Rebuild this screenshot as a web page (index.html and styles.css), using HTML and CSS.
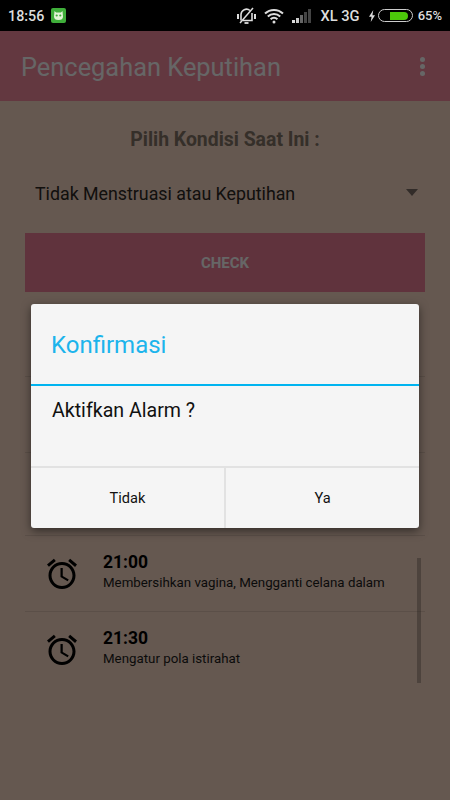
FILE: index.html
```html
<!DOCTYPE html>
<html lang="id">
<head>
    <meta charset="UTF-8">
    <meta name="viewport" content="width=device-width, initial-scale=1.0">
    <title>Pencegahan Keputihan</title>
    <link rel="stylesheet" href="styles.css">
</head>
<body>

<div class="phone">
    <div class="status-bar">
        <span class="clock">18:56</span>
        <svg class="app-badge" width="15" height="15" viewBox="0 0 15 15">
            <rect width="15" height="15" rx="2" fill="#3fae3a"/>
            <path d="M3.5 3l1.6 1.6h4.8L11.5 3l.5 5.5a4.5 3.6 0 0 1-9 0z" fill="#e4f5d8"/>
            <circle cx="5.7" cy="7.5" r="1.1" fill="#3fae3a"/>
            <circle cx="9.3" cy="7.5" r="1.1" fill="#3fae3a"/>
        </svg>
        <div class="status-right">
            <svg width="19" height="20" viewBox="0 0 19 20" fill="none">
                <path d="M0 8h2v5H0zM17 8h2v5h-2z" fill="#ddd"/>
                <path d="M4 14.5V8.5a5.5 5.5 0 0 1 9-4M15 7v7.5H6" stroke="#ddd" stroke-width="1.6"/>
                <path d="M3 17L16 2" stroke="#ddd" stroke-width="1.5"/>
                <path d="M7.5 17h4" stroke="#ddd" stroke-width="1.8"/>
            </svg>
            <svg class="wifi" width="20" height="16" viewBox="0 0 20 16" fill="none" stroke="#ddd" stroke-width="2">
                <path d="M1 5.5a13 13 0 0 1 18 0M3.8 8.5a9 9 0 0 1 12.4 0M6.6 11.2a5 5 0 0 1 6.8 0"/>
                <circle cx="10" cy="14" r="1.5" fill="#ddd" stroke="none"/>
            </svg>
            <svg class="signal" width="20" height="14" viewBox="0 0 20 14">
                <rect x="0" y="11" width="3" height="3" fill="#ddd"/>
                <rect x="4" y="9" width="3" height="5" fill="#ccc"/>
                <rect x="8" y="6" width="3" height="8" fill="#666"/>
                <rect x="12" y="3" width="3" height="11" fill="#444"/>
                <rect x="16" y="0" width="3" height="14" fill="#444"/>
            </svg>
            <span class="carrier">XL 3G</span>
            <svg class="bolt" width="6" height="14" viewBox="0 0 7 14">
                <path d="M5 0L0 8h3l-1 6 5-8H4z" fill="#ddd"/>
            </svg>
            <div class="battery"><div class="battery-level" style="width:65%"></div></div>
            <span class="percent">65%</span>
        </div>
    </div>

    <div class="screen">
        <header class="app-bar">
            <h1>Pencegahan Keputihan</h1>
            <div class="overflow"><i></i><i></i><i></i></div>
        </header>

        <div class="content">
            <h2>Pilih Kondisi Saat Ini :</h2>
            <div class="spinner">
                <span>Tidak Menstruasi atau Keputihan</span>
                <div class="spinner-arrow"></div>
            </div>
            <div class="check-btn">CHECK</div>
            <div class="alarm-list">
                <div class="alarm-row"></div>
                <div class="alarm-row"></div>
                <div class="alarm-row tall"></div>
                <div class="alarm-row">
                    <svg class="alarm-icon" width="36" height="36" viewBox="0 0 24 24"><path d="M22 5.72l-4.6-3.86-1.29 1.53 4.6 3.86L22 5.72zM7.88 3.39L6.6 1.86 2 5.71l1.29 1.53 4.59-3.85zM12.5 8H11v6l4.75 2.85.75-1.23-4-2.37V8zM12 4c-4.97 0-9 4.03-9 9s4.03 9 9 9 9-4.03 9-9-4.03-9-9-9zm0 16c-3.87 0-7-3.13-7-7s3.13-7 7-7 7 3.13 7 7-3.13 7-7 7z"/></svg>
                    <div class="alarm-body">
                        <div class="alarm-time">21:00</div>
                        <div class="alarm-text">Membersihkan vagina, Mengganti celana dalam</div>
                    </div>
                </div>
                <div class="alarm-row last">
                    <svg class="alarm-icon" width="36" height="36" viewBox="0 0 24 24"><path d="M22 5.72l-4.6-3.86-1.29 1.53 4.6 3.86L22 5.72zM7.88 3.39L6.6 1.86 2 5.71l1.29 1.53 4.59-3.85zM12.5 8H11v6l4.75 2.85.75-1.23-4-2.37V8zM12 4c-4.97 0-9 4.03-9 9s4.03 9 9 9 9-4.03 9-9-4.03-9-9-9zm0 16c-3.87 0-7-3.13-7-7s3.13-7 7-7 7 3.13 7 7-3.13 7-7 7z"/></svg>
                    <div class="alarm-body">
                        <div class="alarm-time">21:30</div>
                        <div class="alarm-text">Mengatur pola istirahat</div>
                    </div>
                </div>
                <div class="scrollbar"></div>
            </div>
        </div>

        <div class="scrim">
            <div class="dialog">
                <div class="dialog-title">Konfirmasi</div>
                <div class="dialog-msg">Aktifkan Alarm ?</div>
                <div class="dialog-actions">
                    <div class="dialog-btn">Tidak</div>
                    <div class="dialog-btn">Ya</div>
                </div>
            </div>
        </div>
    </div>
</div>

</body>
</html>
```

FILE: styles.css
```css
* {
    box-sizing: border-box;
}
body {
    font-family: Roboto, sans-serif;
    margin: 0;
    padding: 0;
}
.phone {
    width: 450px;
    height: 800px;
    display: flex;
    flex-direction: column;
    overflow: hidden;
}
.status-bar {
    height: 31px;
    flex: none;
    background-color: #000;
    color: #ddd;
    display: flex;
    align-items: center;
    padding: 0 8px;
    font-size: 13px;
    font-weight: 500;
}
.clock {
    font-size: 14.3px;
}
.app-badge {
    margin-left: 7px;
    margin-top: -1px;
}
.status-right {
    margin-left: auto;
    display: flex;
    align-items: center;
}
.wifi {
    margin-left: 8px;
}
.signal {
    margin-left: 8px;
}
.carrier {
    margin-left: 8px;
    font-size: 14.7px;
}
.bolt {
    margin-left: 9px;
}
.battery {
    width: 35px;
    height: 13px;
    margin-left: 3px;
    border: 1.5px solid #ccc;
    border-radius: 7px;
    padding: 1.5px 2px;
}
.battery-level {
    height: 100%;
    margin-left: 9px;
    background-color: #4cc80a;
    border-radius: 0 4px 4px 0;
}
.percent {
    margin-left: 5px;
}
.screen {
    flex: 1;
    position: relative;
    background-color: #fcdcc8;
    display: flex;
    flex-direction: column;
}
.app-bar {
    height: 70px;
    flex: none;
    background-color: #f88ca0;
    color: #fff;
    display: flex;
    align-items: center;
    justify-content: space-between;
    padding: 0 25px 0 21px;
}
.app-bar h1 {
    margin: 0;
    padding-top: 2px;
    font-size: 25.4px;
    font-weight: 400;
}
.overflow {
    display: flex;
    flex-direction: column;
    gap: 2px;
}
.overflow i {
    display: block;
    width: 5px;
    height: 5px;
    border-radius: 50%;
    background-color: #fff;
}
.content {
    flex: 1;
    padding: 0 25px;
}
.content h2 {
    margin: 28px 0 0;
    font-size: 19.4px;
    font-weight: 700;
    line-height: 22px;
    text-align: center;
    color: #857568;
}
.spinner {
    display: flex;
    align-items: center;
    justify-content: space-between;
    height: 44px;
    margin-top: 20px;
    padding: 0 7px 0 10px;
    font-size: 17.8px;
    color: #2d2824;
}
.spinner-arrow {
    width: 0;
    height: 0;
    margin-top: -2px;
    border-left: 6px solid transparent;
    border-right: 6px solid transparent;
    border-top: 7px solid #7d6e66;
}
.check-btn {
    height: 59px;
    margin-top: 18px;
    background-color: #f08098;
    color: #fff;
    font-size: 15px;
    font-weight: 700;
    display: flex;
    align-items: center;
    justify-content: center;
}
.alarm-list {
    position: relative;
    margin-top: 9px;
}
.alarm-row {
    height: 76px;
    display: flex;
    align-items: center;
    border-bottom: 1px solid #e3c6b4;
    padding-left: 19px;
    color: #000;
}
.alarm-row.tall {
    height: 83px;
}
.alarm-row.last {
    border-bottom-color: transparent;
}
.alarm-icon {
    flex: none;
    margin-right: 23px;
}
.alarm-body {
    margin-bottom: 3px;
}
.alarm-time {
    font-size: 17.5px;
    font-weight: 700;
    line-height: 21px;
}
.alarm-text {
    font-size: 13.3px;
    line-height: 20px;
    color: #1c1c1c;
}
.scrollbar {
    position: absolute;
    right: 4px;
    top: 257px;
    width: 4px;
    height: 125px;
    background-color: rgba(0, 0, 0, 0.23);
}
.scrim {
    position: absolute;
    inset: 0;
    background-color: rgba(0, 0, 0, 0.6);
}
.dialog {
    position: absolute;
    left: 31px;
    top: 273px;
    width: 388px;
    height: 224px;
    background-color: #f5f5f5;
    border-radius: 3px;
    box-shadow: 0 3px 10px rgba(0, 0, 0, 0.5);
    display: flex;
    flex-direction: column;
}
.dialog-title {
    height: 82px;
    flex: none;
    padding: 2px 20px 0;
    display: flex;
    align-items: center;
    font-size: 24px;
    color: #1cb4ec;
    border-bottom: 2px solid #00b4f0;
}
.dialog-msg {
    flex: 1;
    padding: 13px 21px 0;
    font-size: 19.6px;
    color: #111;
}
.dialog-actions {
    height: 62px;
    flex: none;
    display: flex;
    border-top: 2px solid #e2e2e2;
}
.dialog-btn {
    flex: 1;
    display: flex;
    align-items: center;
    justify-content: center;
    font-size: 14.6px;
    color: #111;
}
.dialog-btn + .dialog-btn {
    border-left: 2px solid #e2e2e2;
}
```
